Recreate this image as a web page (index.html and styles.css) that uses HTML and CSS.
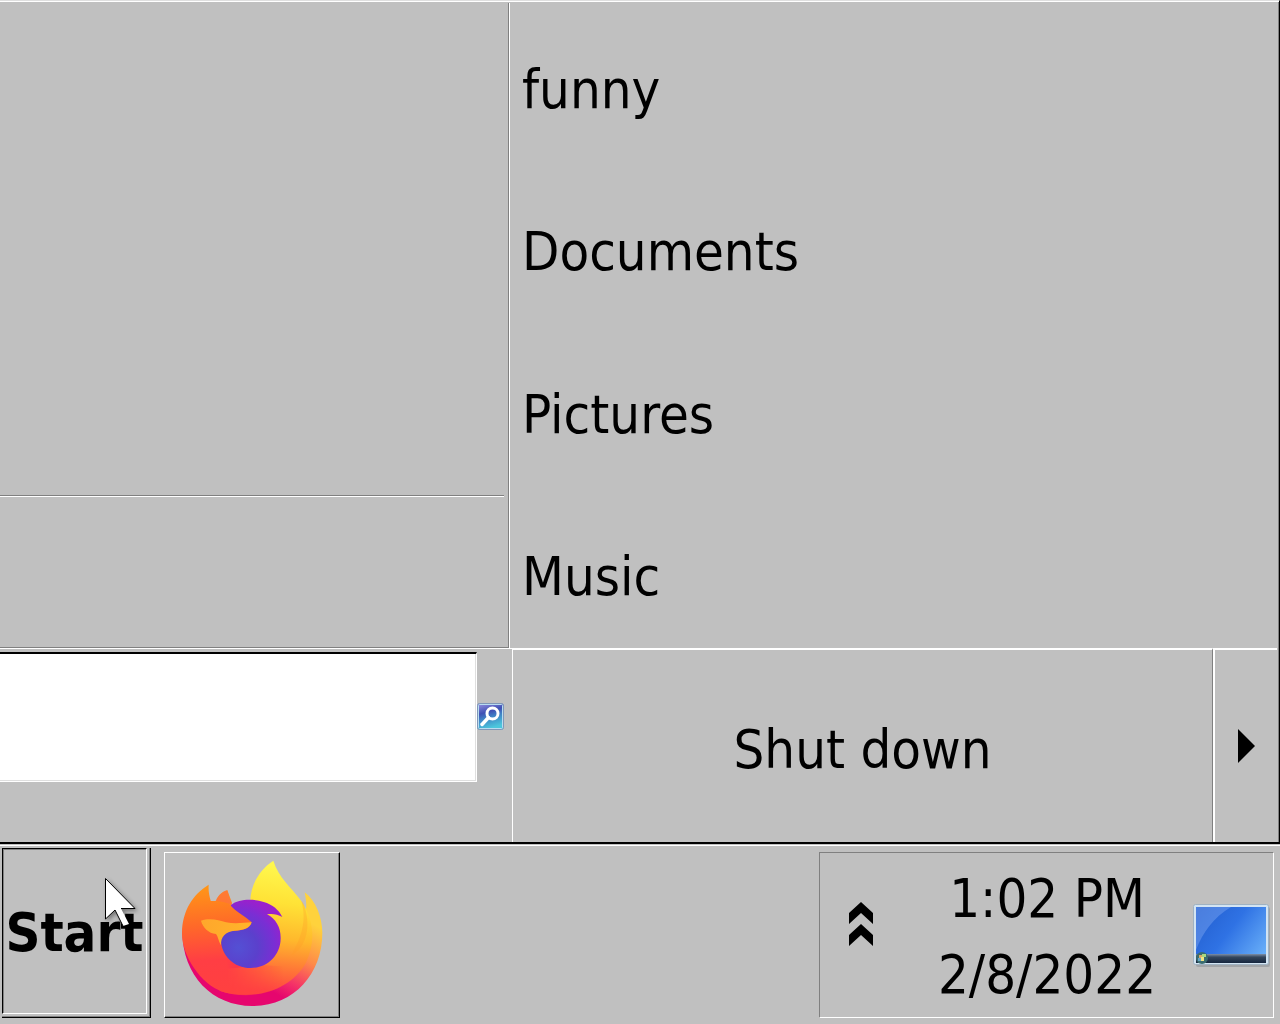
FILE: index.html
```html
<!DOCTYPE html>
<html lang="en">
<head>
<meta charset="utf-8">
<meta name="viewport" content="width=device-width, initial-scale=1">
<title>Start menu</title>
<link rel="stylesheet" href="styles.css">
</head>
<body>
<main class="start-menu">
  <div class="menu-body">
    <section class="programs" aria-label="Programs">
      <div class="pinned"></div>
      <div class="all-programs"></div>
    </section>
    <nav class="places" aria-label="Places">
      <a href="#funny">funny</a>
      <a href="#documents">Documents</a>
      <a href="#pictures">Pictures</a>
      <a href="#music">Music</a>
    </nav>
  </div>
  <div class="menu-foot">
    <form class="search">
      <input type="text" class="search-box" aria-label="Search programs and files">
      <button type="button" class="search-button" aria-label="Search">
        <svg width="27" height="27" viewBox="0 0 27 27">
          <defs>
            <linearGradient id="lens-bg" x1="0" y1="0" x2="0.3" y2="1">
              <stop offset="0" stop-color="#9a94e2"/><stop offset="0.4" stop-color="#3f50b4"/><stop offset="0.6" stop-color="#3f80c4"/><stop offset="1" stop-color="#4cc6dc"/>
            </linearGradient>
          </defs>
          <rect x="0.5" y="0.5" width="26" height="26" rx="2" fill="url(#lens-bg)" stroke="#7f97b8"/>
          <rect x="1.5" y="1.5" width="24" height="24" rx="1" fill="none" stroke="#b9dcf0"/>
          <circle cx="15.5" cy="10.5" r="5.5" fill="none" stroke="#fff" stroke-width="3"/>
          <path d="M11.5 14.5L5 21.5" stroke="#fff" stroke-width="3.5" stroke-linecap="round"/>
        </svg>
      </button>
    </form>
    <button type="button" class="shutdown">Shut down</button>
    <button type="button" class="shutdown-more" aria-label="More shut down options">
      <svg width="17" height="34" viewBox="0 0 17 34"><path d="M0 0L17 17L0 34Z"/></svg>
    </button>
  </div>
</main>

<footer class="taskbar">
  <button type="button" class="start">
    <span class="start-face">Start</span>
    <svg class="cursor" width="36" height="54" viewBox="0 0 36 54" aria-hidden="true">
      <path d="M0.5 0.5V41L10 32L18 48L24 46L16 30.5H30Z" fill="#fff"/>
      <path d="M18 48L10 32L0.5 41V0.5L30 30.5H16" fill="none" stroke="#000"/>
    </svg>
  </button>
  <button type="button" class="task" aria-label="Firefox">
    <svg width="145" height="149" viewBox="30 24 435 447">
      <defs>
        <linearGradient id="fx-rim" gradientUnits="userSpaceOnUse" x1="450" y1="230" x2="340" y2="440">
          <stop offset="0" stop-color="#ffd23c"/><stop offset="0.45" stop-color="#ff8a48"/><stop offset="0.8" stop-color="#f43068"/><stop offset="1" stop-color="#e6066e"/>
        </linearGradient>
        <linearGradient id="fx-left" gradientUnits="userSpaceOnUse" x1="130" y1="110" x2="150" y2="420">
          <stop offset="0" stop-color="#ff9418"/><stop offset="0.35" stop-color="#ff6a28"/><stop offset="0.7" stop-color="#ff3e44"/><stop offset="1" stop-color="#ff4040"/>
        </linearGradient>
        <linearGradient id="fx-tail" gradientUnits="userSpaceOnUse" x1="330" y1="40" x2="285" y2="420">
          <stop offset="0" stop-color="#fff84e"/><stop offset="0.3" stop-color="#ffe236"/><stop offset="0.58" stop-color="#ffb82c"/><stop offset="0.8" stop-color="#ff7a36"/><stop offset="1" stop-color="#ff4442"/>
        </linearGradient>
        <radialGradient id="fx-globe" gradientUnits="userSpaceOnUse" cx="205" cy="290" r="145">
          <stop offset="0" stop-color="#5450d4"/><stop offset="0.4" stop-color="#5b40cc"/><stop offset="0.75" stop-color="#7a2ed4"/><stop offset="1" stop-color="#9a20cc"/>
        </radialGradient>
        <linearGradient id="fx-muzzle" gradientUnits="userSpaceOnUse" x1="90" y1="210" x2="240" y2="230">
          <stop offset="0" stop-color="#ffa62c"/><stop offset="1" stop-color="#ffb42a"/>
        </linearGradient>
        <linearGradient id="fx-fade" gradientUnits="userSpaceOnUse" x1="170" y1="0" x2="340" y2="0">
          <stop offset="0" stop-color="#fff"/><stop offset="1" stop-color="#000"/>
        </linearGradient>
        <mask id="fx-mask" maskUnits="userSpaceOnUse" x="0" y="0" width="495" height="495">
          <rect width="495" height="495" fill="url(#fx-fade)"/>
        </mask>
      </defs>
      <path fill="url(#fx-rim)" d="M37 240C37 375 128 465 247 465C370 465 457 370 457 245C457 200 438 150 404 124C408 145 410 160 408 174L300 300L60 250Z"/>
      <path fill="url(#fx-tail)" d="M310 29C270 55 242 100 241 150L300 205L245 345L120 360L150 420C250 450 360 420 408 335C438 270 432 210 394 150C365 110 325 80 310 29Z"/>
      <path fill="url(#fx-left)" mask="url(#fx-mask)" d="M116 101C68 130 37 180 36 245C34 310 90 400 160 423C250 450 350 420 395 350L245 340L160 275L186 155L172 118C158 121 145 132 138 149L123 152C117 134 115 118 116 101Z"/>
      <path fill="#ff7040" opacity="0.65" d="M138 149C146 132 158 121 172 118C176 132 178 143 186 160Z"/>
      <path fill="url(#fx-globe)" d="M183 162C207 143 250 143 281 153C308 161 327 177 337 198C323 190 307 187 291 190C318 204 333 230 332 263C331 314 291 351 242 351C192 351 153 313 153 266C153 225 176 190 183 162Z"/>
      <path fill="url(#fx-left)" d="M120 150C143 150 166 152 181 163C197 183 224 194 245 214C238 236 210 239 188 240C150 246 100 220 104 185Z"/>
      <path fill="url(#fx-muzzle)" d="M93 209C116 200 147 206 168 214C195 219 222 215 245 214C239 234 218 238 194 239C166 242 152 257 153 283C145 269 144 256 138 249C116 247 98 229 93 209Z"/>
      <path fill="#ff9c28" opacity="0.3" d="M364 312C392 300 418 260 411 200C407 176 402 153 394 150C412 210 392 265 364 312Z"/>
    </svg>
  </button>
  <section class="tray" aria-label="Notification area">
    <button type="button" class="tray-more" aria-label="Show hidden icons">
      <svg width="24" height="44" viewBox="0 0 24 44"><path d="M0 11L12 0L24 11V22L12 11L0 22ZM0 33L12 22L24 33V44L12 33L0 44Z"/></svg>
    </button>
    <time class="clock" datetime="2022-02-08T13:02"><span>1:02 PM</span><span>2/8/2022</span></time>
    <button type="button" class="show-desktop" aria-label="Show desktop">
      <svg width="78" height="63" viewBox="0 0 78 63">
        <defs>
          <linearGradient id="desk" x1="0" y1="0.2" x2="1" y2="0.8"><stop offset="0" stop-color="#2460d0"/><stop offset="0.45" stop-color="#2f72e4"/><stop offset="1" stop-color="#68aef8"/></linearGradient>
          <linearGradient id="desk-bar" x1="0" y1="0" x2="0" y2="1"><stop offset="0" stop-color="#7d8fa8"/><stop offset="0.35" stop-color="#34465c"/><stop offset="1" stop-color="#15263e"/></linearGradient>
        </defs>
        <rect x="3" y="3" width="74" height="60" rx="2" fill="#8e9298" opacity="0.6"/>
        <rect x="0.5" y="0.5" width="75" height="60" rx="2" fill="#d3e4f2" stroke="#9fb2c2"/>
        <rect x="3" y="3" width="70" height="56" fill="url(#desk)"/>
        <path d="M3 3H38C20 14 10 28 3 46Z" fill="#7ca6f2" opacity="0.45"/>
        <rect x="3" y="50" width="70" height="9" fill="url(#desk-bar)"/>
        <circle cx="9" cy="54" r="6" fill="#3a6c70"/>
        <path d="M6 51h3v3h-3z" fill="#d8a868"/><path d="M9 50h4v3h-4z" fill="#a8d880"/><path d="M5 54h3v3h-3z" fill="#64a4c8"/><path d="M8 53h3v4h-3z" fill="#f2e480"/>
      </svg>
    </button>
  </section>
</footer>
</body>
</html>
```
FILE: styles.css
```css
* { box-sizing: border-box; }

body {
  margin: 0;
  min-height: 100vh;
  display: flex;
  flex-direction: column;
  background: #c0c0c0;
  color: #000;
  font-family: "DejaVu Sans Condensed", "DejaVu Sans", sans-serif;
  font-size: 54px;
  line-height: 76px;
}

button {
  margin: 0;
  padding: 0;
  border: 0;
  background: none;
  color: inherit;
  font: inherit;
}

svg { display: block; }

/* Start menu */
.start-menu {
  flex: 1;
  display: flex;
  flex-direction: column;
  border-top: 1px solid #dfdfdf;
  border-right: 1px solid #000;
  border-bottom: 2px solid #000;
  box-shadow: inset 0 1px #fff, inset -1px 0 #808080;
  padding: 2px 2px 0 0;
}

.menu-body {
  flex: 1;
  display: grid;
  grid-template-columns: minmax(0, 509fr) minmax(0, 768fr);
}

.programs {
  display: flex;
  flex-direction: column;
  border-right: 1px solid #808080;
  border-bottom: 1px solid #808080;
}

.pinned {
  flex: 1;
  margin-right: 4px;
  border-bottom: 1px solid #808080;
  box-shadow: 0 1px #fff;
}

.all-programs { height: 151px; }

.places {
  display: flex;
  flex-direction: column;
  gap: 32px;
  padding: 22px 12px 6px;
  border-left: 1px solid #fff;
}

.places a {
  flex: 1;
  display: flex;
  align-items: center;
  color: inherit;
  text-decoration: none;
}

.menu-foot {
  display: grid;
  grid-template-columns: minmax(0, 512fr) minmax(0, 701fr) 64px;
  height: 194px;
}

.search {
  display: flex;
  align-items: flex-start;
  border-top: 1px solid #fff;
  padding: 3px 8px 0 0;
}

.search-box {
  flex: 1;
  min-width: 0;
  height: 130px;
  padding: 0 12px;
  border: 1px solid #fff;
  border-width: 2px 1px 1px 0;
  border-top-color: #000;
  border-radius: 0;
  background: #fff;
  box-shadow: inset -1px -1px #dfdfdf;
  font: inherit;
  outline: none;
}

.search-button { margin-top: 51px; }

.shutdown {
  border-top: 2px solid #fff;
  border-left: 1px solid #fff;
  border-right: 1px solid #808080;
  padding-top: 8px;
}

.shutdown-more {
  display: flex;
  align-items: center;
  justify-content: center;
  border-top: 2px solid #fff;
  border-left: 2px solid #fff;
}

/* Taskbar */
.taskbar {
  display: flex;
  gap: 13px;
  height: 180px;
  padding: 4px 6px 6px 2px;
  box-shadow: inset 0 1px #c0c0c0, inset 0 2px #fff;
}

.start {
  position: relative;
  width: 149px;
  padding: 0 3px 3px 0;
  border-right: 1px solid #000;
  border-bottom: 1px solid #000;
  box-shadow: inset -1px -1px #808080;
  font-weight: bold;
}

.start-face {
  display: flex;
  align-items: center;
  justify-content: center;
  height: 100%;
  padding-top: 4px;
  border: 1px solid #000;
  border-right-color: #fff;
  border-bottom-color: #fff;
  box-shadow: inset 1px 1px #808080;
}

.cursor {
  position: absolute;
  left: 103px;
  top: 30px;
  filter: drop-shadow(2px 2px 2px rgba(0, 0, 0, 0.4));
}

.task {
  display: flex;
  align-items: center;
  justify-content: center;
  width: 176px;
  margin-top: 4px;
  padding-bottom: 4px;
  border: 1px solid #fff;
  border-right-color: #000;
  border-bottom-color: #000;
  box-shadow: inset -1px -1px #808080;
}

.tray {
  display: flex;
  align-items: center;
  width: 455px;
  margin-top: 4px;
  margin-left: auto;
  padding-right: 2px;
  border: 1px solid #808080;
  border-right-color: #fff;
  border-bottom-color: #fff;
}

.tray-more {
  padding: 0 28px 22px 29px;
}

.clock {
  flex: 1;
  display: flex;
  flex-direction: column;
  text-align: center;
  padding-top: 4px;
}
```
